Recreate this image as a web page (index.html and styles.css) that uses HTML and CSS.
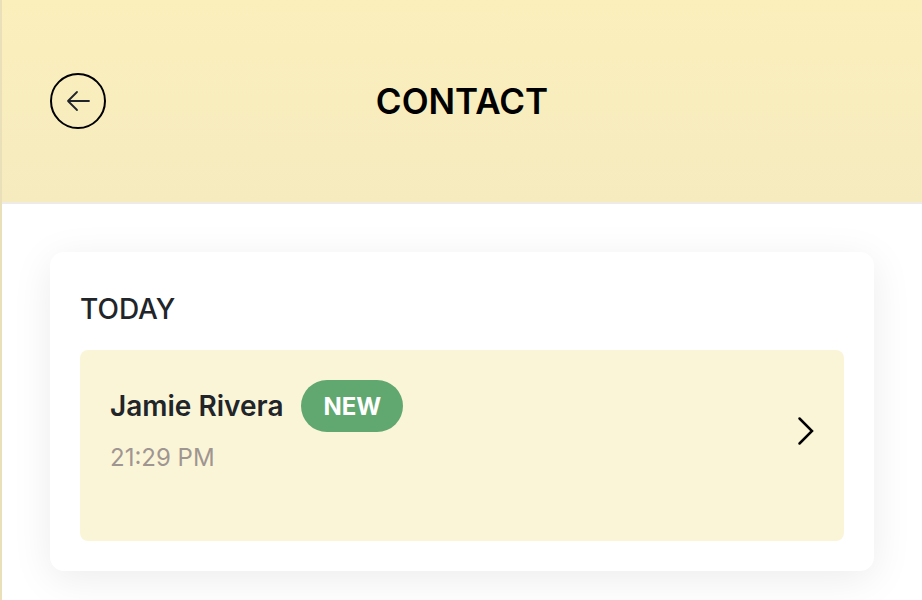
FILE: index.html
```html
<!DOCTYPE html>
<html lang="en">
<head>
    <meta charset="utf-8">
    <meta name="viewport" content="width=device-width, initial-scale=1">
    <title>Contact</title>
    <link rel="stylesheet" href="styles.css">
</head>
<body>
    <header class="header">
        <button class="back-btn" type="button" aria-label="Back">
            <svg width="24" height="24" viewBox="0 0 24 24" fill="none" stroke="currentColor" stroke-width="1.800" stroke-linecap="round" stroke-linejoin="round">
                <path d="M23 12H2M11 3L2 12L11 21"/>
            </svg>
        </button>
        <h1 class="title">CONTACT</h1>
    </header>

    <main class="content">
        <section class="card">
            <h2 class="card-title">TODAY</h2>
            <a class="contact" href="#">
                <div class="contact-info">
                    <div class="contact-name">
                        <span>Jamie Rivera</span>
                        <span class="badge">NEW</span>
                    </div>
                    <div class="contact-time">21:29 PM</div>
                </div>
                <svg class="chevron" width="18" height="30" viewBox="0 0 18 30" fill="none" stroke="currentColor" stroke-width="2.500" stroke-linecap="round" stroke-linejoin="miter">
                    <path d="M3.500 2.500L16 15L3.500 27.500"/>
                </svg>
            </a>
        </section>
    </main>
</body>
</html>
```

FILE: styles.css
```css
* {
    box-sizing: border-box;
}
body {
    margin: 0;
    min-height: 100vh;
    border-left: 2px solid #e9dfb9;
    background-color: #fff;
    color: #212529;
    font-family: Inter, "Liberation Sans", sans-serif;
}
.header {
    display: grid;
    grid-template-columns: 56px 1fr 56px;
    align-items: center;
    padding: 73px 48px;
    border-bottom: 2px solid #eeeae6;
    background: linear-gradient(#fbefbc, #f6ebbf);
}
.back-btn {
    display: flex;
    align-items: center;
    justify-content: center;
    width: 56px;
    height: 56px;
    padding: 0;
    border: 2px solid #000;
    border-radius: 50%;
    background: none;
    color: #212529;
    cursor: pointer;
}
.title {
    margin: 0;
    color: #000;
    font-size: 35px;
    font-weight: 600;
    line-height: 56px;
    text-align: center;
}
.content {
    padding: 48px;
}
.card {
    padding: 36px 30px 30px;
    border-radius: 14px;
    background-color: #fff;
    box-shadow: 0 8px 40px rgba(0, 0, 0, 0.08);
}
.card-title {
    margin: 0 0 20px;
    font-size: 28px;
    font-weight: 500;
    line-height: 42px;
}
.contact {
    display: flex;
    align-items: center;
    justify-content: space-between;
    min-height: 191px;
    padding: 30px 30px 60px;
    border-radius: 8px;
    background-color: #fbf5d8;
    color: inherit;
    text-decoration: none;
}
.contact-info {
    align-self: flex-start;
}
.contact-name {
    display: flex;
    align-items: center;
    gap: 18px;
    font-size: 28px;
    font-weight: 600;
}
.badge {
    padding: 1px 22px 0;
    border-radius: 26px;
    background-color: #60a770;
    color: #fff;
    font-size: 24px;
    font-weight: 700;
    line-height: 51px;
}
.contact-time {
    margin-top: 8px;
    color: #9f9591;
    font-size: 24px;
    line-height: 36px;
}
.chevron {
    color: #000;
}
```
